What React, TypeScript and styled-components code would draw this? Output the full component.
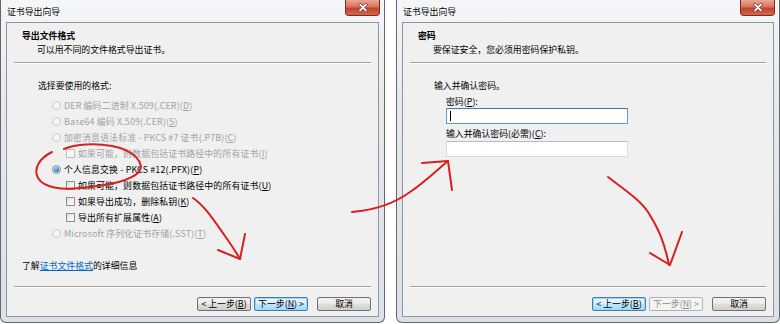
import { FC, ReactNode } from 'react'
import styled, { createGlobalStyle, css } from 'styled-components'

const GlobalStyle = createGlobalStyle`
	html, body {
		margin: 0;
		padding: 0;
		background: #fff;
	}
	body {
		font-family: "Noto Sans CJK SC", "Liberation Sans", sans-serif;
		font-size: 8.9px;
		color: #000;
	}
`

const Page = styled.div`
	position: relative;
	width: 780px;
	height: 324px;
	display: flex;
	gap: 11px;
	overflow: hidden;
	background: #fff;
`

const Window = styled.div<{ $width: number }>`
	width: ${p => p.$width}px;
	height: 323px;
	box-sizing: border-box;
	display: flex;
	flex-direction: column;
	padding: 0 5px 5px;
	border: 1px solid #62676e;
	border-top: none;
	border-radius: 0 0 6px 6px;
	background: linear-gradient(to bottom, #f4f6f8 0%, #e6eaef 30%, #dbe1e8 100%);
`

const TitleBar = styled.div`
	height: 22px;
	display: flex;
	justify-content: space-between;
	align-items: flex-start;
`

const Title = styled.div`
	margin: 6px 0 0 1px;
	line-height: 12px;
	text-shadow: 0 0 4px #fff, 0 0 2px #fff;
`

const CloseButton = styled.div`
	width: 35px;
	height: 16px;
	box-sizing: border-box;
	margin-right: -1px;
	border: 1px solid #7d2a1c;
	border-top: none;
	border-radius: 0 0 4px 4px;
	background: linear-gradient(to bottom, #e9a897 0%, #d8745d 45%, #c5412b 55%, #d0694f 100%);
	display: flex;
	align-items: center;
	justify-content: center;
	svg {
		display: block;
	}
`

const Client = styled.div`
	flex: 1;
	display: flex;
	flex-direction: column;
	background: #f0f0f0;
	border: 1px solid #8e959d;
	min-height: 0;
`

const Header = styled.div`
	padding: 6px 0 5px 15px;
`

const HeaderTitle = styled.div`
	font-weight: 700;
	line-height: 14px;
`

const HeaderSub = styled.div`
	padding-left: 15px;
	line-height: 14px;
`

const Separator = styled.div`
	margin: 0 7px;
	border-top: 1px solid #a0a0a0;
	border-bottom: 1px solid #fff;
`

const Body = styled.div`
	flex: 1;
	display: flex;
	flex-direction: column;
	padding: 15px 0 13px 15px;
`

const Section = styled.div`
	padding-left: 16px;
	display: flex;
	flex-direction: column;
`

const Label = styled.div<{ $top?: number; $indent?: number }>`
	line-height: ${p => (p.$top === undefined ? 14 : 12)}px;
	margin-top: ${p => p.$top ?? 0}px;
	padding-left: ${p => p.$indent ?? 0}px;
`

const Options = styled.div`
	margin-top: 4px;
	display: flex;
	flex-direction: column;
`

const Option = styled.div<{ $indent: number; $disabled?: boolean }>`
	height: 16px;
	display: flex;
	align-items: center;
	gap: 3px;
	padding-left: ${p => p.$indent}px;
	color: ${p => (p.$disabled ? '#a2a2a2' : '#000')};
	white-space: nowrap;
	letter-spacing: 0.15px;
`

const Radio = styled.span<{ $checked?: boolean; $disabled?: boolean }>`
	width: 9px;
	height: 9px;
	box-sizing: border-box;
	border-radius: 50%;
	flex-shrink: 0;
	border: 1px solid ${p => (p.$disabled ? '#c9c9c9' : '#7f8a96')};
	background: ${p =>
		p.$disabled
			? '#f4f4f4'
			: 'radial-gradient(circle at 50% 50%, #eef2f6 0%, #d9dfe6 100%)'};
	display: flex;
	align-items: center;
	justify-content: center;
	${p =>
		p.$checked &&
		css`
			&::after {
				content: '';
				width: 5px;
				height: 5px;
				border-radius: 50%;
				background: radial-gradient(circle at 40% 35%, #8fd4ff 0%, #1a6fc4 70%, #0f4f96 100%);
			}
		`}
`

const Check = styled.span<{ $disabled?: boolean }>`
	width: 9px;
	height: 9px;
	box-sizing: border-box;
	flex-shrink: 0;
	border: 1px solid ${p => (p.$disabled ? '#bfbfbf' : '#8e8f8f')};
	background: ${p =>
		p.$disabled ? '#f7f7f7' : 'linear-gradient(135deg, #dcdcdc 0%, #f6f6f6 60%, #fff 100%)'};
`

const Key = styled.span`
	text-decoration: underline;
`

const MoreInfo = styled.div`
	margin-top: auto;
	line-height: 14px;
	a {
		color: #0066cc;
		text-decoration: underline;
	}
`

const Field = styled.div<{ $focused?: boolean; $top: number }>`
	width: 182px;
	height: 16px;
	box-sizing: border-box;
	margin: ${p => p.$top}px 0 0 12px;
	background: #fff;
	border: 1px solid ${p => (p.$focused ? '#5b9fd6' : '#d9dde2')};
	border-top-color: ${p => (p.$focused ? '#3d7bad' : '#b5bcc4')};
	display: flex;
	align-items: center;
	padding-left: 3px;
`

const Caret = styled.span`
	width: 1px;
	height: 10px;
	background: #000;
`

const Footer = styled.div`
	display: flex;
	justify-content: flex-end;
	padding: 9px 7px 5px 0;
`

const Button = styled.div<{ $focused?: boolean; $disabled?: boolean; $gap?: number }>`
	width: 54px;
	height: 14px;
	box-sizing: border-box;
	margin-left: ${p => p.$gap ?? 0}px;
	border: 1px solid #707070;
	border-radius: 2px;
	background: linear-gradient(to bottom, #f2f2f2 0%, #ebebeb 48%, #dddddd 52%, #cfcfcf 100%);
	display: flex;
	align-items: center;
	justify-content: center;
	line-height: 12px;
	white-space: nowrap;
	${p =>
		p.$focused &&
		css`
			border-color: #3c7fb1;
			box-shadow: inset 0 0 0 1px #9ed8f6;
			background: linear-gradient(to bottom, #eaf6fd 0%, #d9f0fc 48%, #bee6fd 52%, #a7d9f5 100%);
		`}
	${p =>
		p.$disabled &&
		css`
			border-color: #adb2b5;
			background: #f4f4f4;
			color: #8d8d8d;
		`}
`

const Scribbles = styled.svg`
	position: absolute;
	left: 0;
	top: 0;
	pointer-events: none;
	path {
		fill: none;
		stroke: #d82020;
		stroke-width: 2;
		stroke-linecap: round;
		stroke-linejoin: round;
	}
`

const Dialog: FC<{ width: number; title: string; sub: string; children: ReactNode; footer: ReactNode }> = ({
	width,
	title,
	sub,
	children,
	footer,
}) => (
	<Window $width={width}>
		<TitleBar>
			<Title>证书导出向导</Title>
			<CloseButton>
				<svg width="10" height="9" viewBox="0 0 10 9">
					<path d="M2 1.5 L8 7.5 M8 1.5 L2 7.5" stroke="#5a1b10" strokeWidth="3" strokeLinecap="round" />
					<path d="M2 1.5 L8 7.5 M8 1.5 L2 7.5" stroke="#fff" strokeWidth="1.8" strokeLinecap="round" />
				</svg>
			</CloseButton>
		</TitleBar>
		<Client>
			<Header>
				<HeaderTitle>{title}</HeaderTitle>
				<HeaderSub>{sub}</HeaderSub>
			</Header>
			<Separator />
			<Body>{children}</Body>
			<Separator />
			<Footer>{footer}</Footer>
		</Client>
	</Window>
)

export default function App() {
	return (
		<Page>
			<GlobalStyle />
			<Dialog
				width={385}
				title="导出文件格式"
				sub="可以用不同的文件格式导出证书。"
				footer={
					<>
						<Button>&lt; 上一步(<Key>B</Key>)</Button>
						<Button $focused $gap={3}>下一步(<Key>N</Key>) &gt;</Button>
						<Button $gap={9}>取消</Button>
					</>
				}
			>
				<Section>
					<Label>选择要使用的格式:</Label>
					<Options>
						<Option $indent={14} $disabled>
							<Radio $disabled />
							<span>DER 编码二进制 X.509(.CER)(<Key>D</Key>)</span>
						</Option>
						<Option $indent={14} $disabled>
							<Radio $disabled />
							<span>Base64 编码 X.509(.CER)(<Key>S</Key>)</span>
						</Option>
						<Option $indent={14} $disabled>
							<Radio $disabled />
							<span>加密消息语法标准 - PKCS #7 证书(.P7B)(<Key>C</Key>)</span>
						</Option>
						<Option $indent={28} $disabled>
							<Check $disabled />
							<span>如果可能，则数据包括证书路径中的所有证书(<Key>I</Key>)</span>
						</Option>
						<Option $indent={14}>
							<Radio $checked />
							<span>个人信息交换 - PKCS #12(.PFX)(<Key>P</Key>)</span>
						</Option>
						<Option $indent={28}>
							<Check />
							<span>如果可能，则数据包括证书路径中的所有证书(<Key>U</Key>)</span>
						</Option>
						<Option $indent={28}>
							<Check />
							<span>如果导出成功，删除私钥(<Key>K</Key>)</span>
						</Option>
						<Option $indent={28}>
							<Check />
							<span>导出所有扩展属性(<Key>A</Key>)</span>
						</Option>
						<Option $indent={14} $disabled>
							<Radio $disabled />
							<span>Microsoft 序列化证书存储(.SST)(<Key>T</Key>)</span>
						</Option>
					</Options>
				</Section>
				<MoreInfo>
					了解<a>证书文件格式</a>的详细信息
				</MoreInfo>
			</Dialog>
			<Dialog
				width={384}
				title="密码"
				sub="要保证安全，您必须用密码保护私钥。"
				footer={
					<>
						<Button $focused>&lt; 上一步(<Key>B</Key>)</Button>
						<Button $disabled $gap={3}>下一步(<Key>N</Key>) &gt;</Button>
						<Button $gap={9}>取消</Button>
					</>
				}
			>
				<Section>
					<Label>输入并确认密码。</Label>
					<Label $top={3} $indent={12}>
						密码(<Key>P</Key>):
					</Label>
					<Field $focused $top={0}>
						<Caret />
					</Field>
					<Label $top={4} $indent={12}>
						输入并确认密码(必需)(<Key>C</Key>):
					</Label>
					<Field $top={1} />
				</Section>
			</Dialog>
			<Scribbles width="780" height="324" viewBox="0 0 780 324">
				<path d="M52 152 C40 158 33 168 38 178 C44 188 62 190 80 188 C105 186 130 181 139 172 C145 163 134 150 112 146 C95 143 76 144 64 149" />
				<path d="M193 198 C205 206 215 222 225 236 C232 246 236 252 240 259" />
				<path d="M218 250 L240 259 L245 234" />
				<path d="M352 212 C375 210 395 203 410 192 C425 182 437 170 448 161" />
				<path d="M422 163 L448 161 L452 190" />
				<path d="M608 177 C625 190 640 200 648 212 C657 226 664 240 669 265" />
				<path d="M650 253 L670 265 L682 232" />
			</Scribbles>
		</Page>
	)
}
